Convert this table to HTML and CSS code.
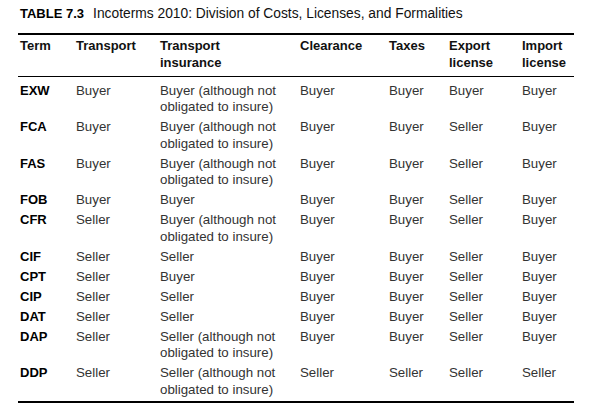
FILE: index.html
```html
<!DOCTYPE html>
<html>
<head>
<meta charset="utf-8">
<link rel="stylesheet" href="styles.css">
</head>
<body>
<div class="page">
  <div class="title"><b>TABLE 7.3</b><span class="caption">Incoterms 2010: Division of Costs, Licenses, and Formalities</span></div>
  <table class="tbl">
    <colgroup>
      <col class="c1"><col class="c2"><col class="c3"><col class="c4"><col class="c5"><col class="c6"><col class="c7">
    </colgroup>
    <thead>
      <tr>
        <th>Term</th><th>Transport</th><th>Transport<br>insurance</th><th>Clearance</th><th>Taxes</th><th>Export<br>license</th><th>Import<br>license</th>
      </tr>
    </thead>
    <tbody>
      <tr class="first"><td class="term">EXW</td><td>Buyer</td><td>Buyer (although not<br>obligated to insure)</td><td>Buyer</td><td>Buyer</td><td>Buyer</td><td>Buyer</td></tr>
      <tr><td class="term">FCA</td><td>Buyer</td><td>Buyer (although not<br>obligated to insure)</td><td>Buyer</td><td>Buyer</td><td>Seller</td><td>Buyer</td></tr>
      <tr><td class="term">FAS</td><td>Buyer</td><td>Buyer (although not<br>obligated to insure)</td><td>Buyer</td><td>Buyer</td><td>Seller</td><td>Buyer</td></tr>
      <tr><td class="term">FOB</td><td>Buyer</td><td>Buyer</td><td>Buyer</td><td>Buyer</td><td>Seller</td><td>Buyer</td></tr>
      <tr><td class="term">CFR</td><td>Seller</td><td>Buyer (although not<br>obligated to insure)</td><td>Buyer</td><td>Buyer</td><td>Seller</td><td>Buyer</td></tr>
      <tr><td class="term">CIF</td><td>Seller</td><td>Seller</td><td>Buyer</td><td>Buyer</td><td>Seller</td><td>Buyer</td></tr>
      <tr><td class="term">CPT</td><td>Seller</td><td>Buyer</td><td>Buyer</td><td>Buyer</td><td>Seller</td><td>Buyer</td></tr>
      <tr><td class="term">CIP</td><td>Seller</td><td>Seller</td><td>Buyer</td><td>Buyer</td><td>Seller</td><td>Buyer</td></tr>
      <tr><td class="term">DAT</td><td>Seller</td><td>Seller</td><td>Buyer</td><td>Buyer</td><td>Seller</td><td>Buyer</td></tr>
      <tr><td class="term">DAP</td><td>Seller</td><td>Seller (although not<br>obligated to insure)</td><td>Buyer</td><td>Buyer</td><td>Seller</td><td>Buyer</td></tr>
      <tr class="last"><td class="term">DDP</td><td>Seller</td><td>Seller (although not<br>obligated to insure)</td><td>Seller</td><td>Seller</td><td>Seller</td><td>Seller</td></tr>
    </tbody>
  </table>
</div>
</body>
</html>
```

FILE: styles.css
```css
html, body {
  margin: 0;
  padding: 0;
  background: #fff;
}
body {
  font-family: "Liberation Sans", Arial, sans-serif;
  color: #333;
}
.page {
  padding: 5px 15px 0 18px;
}
.title {
  padding-left: 2px;
  font-size: 14px;
  line-height: 16px;
  color: #111;
  margin-bottom: 11px;
  white-space: nowrap;
}
.title b {
  font-size: 13px;
  font-weight: bold;
  color: #000;
}
.caption {
  margin-left: 9px;
  font-size: 13.8px;
}
.tbl {
  width: 556px;
  table-layout: fixed;
  border-collapse: separate;
  border-spacing: 0;
  border-top: 2px solid #000;
  border-bottom: 2px solid #000;
  font-size: 13.3px;
  line-height: 16.5px;
}
.c1 { width: 56px; }
.c2 { width: 84px; }
.c3 { width: 140px; }
.c4 { width: 89px; }
.c5 { width: 60px; }
.c6 { width: 73px; }
.c7 { width: 54px; }
.tbl th {
  text-align: left;
  vertical-align: top;
  font-size: 13px;
  font-weight: bold;
  color: #111;
  padding: 3px 0 5px 2px;
  border-bottom: 1px solid #000;
  white-space: nowrap;
}
.tbl td {
  vertical-align: top;
  padding: 2px 0 1.5px 2px;
  white-space: nowrap;
}
.tbl tr.first td {
  padding-top: 5.5px;
}
.tbl tr.last td {
  padding-bottom: 3px;
}
.tbl td.term {
  font-size: 13px;
  font-weight: bold;
  color: #000;
}
```
